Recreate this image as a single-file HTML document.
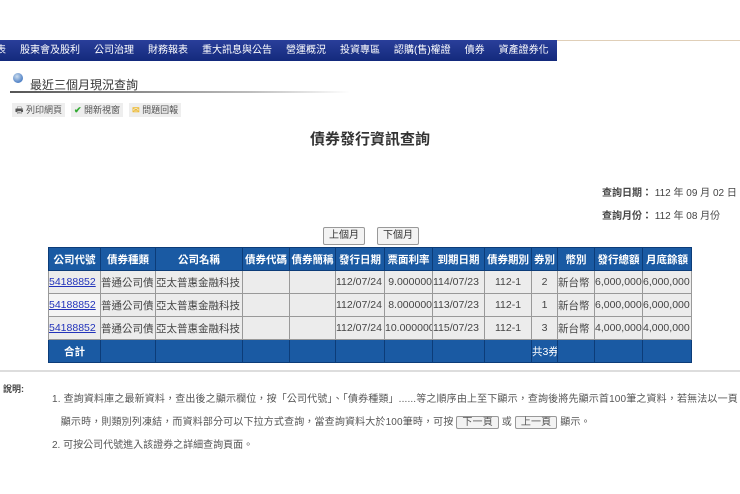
<!DOCTYPE html><html><head><meta charset="utf-8"><style>
body{margin:0;width:740px;height:494px;background:#fff;position:relative;overflow:hidden;font-family:"Liberation Sans","Noto Sans CJK TC",sans-serif;color:#333}
.abs{position:absolute}
.nav{left:0;top:40px;width:557px;height:21px;background:linear-gradient(#2a3f9a,#132a7c);color:#fff;font-size:10px;line-height:21px;white-space:nowrap}
.nav span{margin-right:14px}
table{border-collapse:collapse;font-size:10.5px;table-layout:fixed}
td,th{border:1px solid #999;height:22px;padding:0;white-space:nowrap;overflow:hidden}
th{background:#1a5aa3;color:#fff;border-color:#0c3c78;font-weight:bold}
tr.r td{background:#ececec;color:#444}
tr.tot td{background:#1a5aa3;color:#fff;border-color:#0c3c78;text-align:center}
a{color:#2233bb}
.btn{border:1px solid #999;background:#f3f3f3;border-radius:2px;font-size:10px;height:16px;line-height:16px;padding:0 5px}
</style></head><body>
<div class="abs" style="left:557px;top:40px;width:183px;height:1px;background:#e0cfb8"></div>
<div class="abs nav"><span style="margin-left:-4px">表</span><span>股東會及股利</span><span>公司治理</span><span>財務報表</span><span>重大訊息與公告</span><span>營運概況</span><span>投資專區</span><span>認購(售)權證</span><span>債券</span><span>資產證券化</span></div>
<div class="abs" style="left:13px;top:73px;width:10px;height:10px;border-radius:50%;background:radial-gradient(circle at 40% 35%,#cde,#1a5ab5)"></div>
<div class="abs" style="left:30px;top:76px;font-size:12px;color:#333">最近三個月現況查詢</div>
<div class="abs" style="left:10px;top:91px;width:340px;height:2px;background:linear-gradient(90deg,#555,#bbb 70%,#fff)"></div>
<div class="abs" style="left:12px;top:103px;font-size:9px;color:#555;white-space:nowrap"><span style="background:#eee;padding:2px 3px;margin-right:6px">🖶 列印網頁</span><span style="background:#eee;padding:2px 3px;margin-right:6px"><b style="color:#3a3">✔</b> 開新視窗</span><span style="background:#eee;padding:2px 3px"><b style="color:#eb3">✉</b> 問題回報</span></div>
<div class="abs" style="left:0;width:740px;top:128px;text-align:center;font-size:15px;font-weight:bold;color:#333">債券發行資訊查詢</div>
<div class="abs" style="left:602px;top:184px;font-size:10px;color:#444;white-space:nowrap"><b>查詢日期：</b> 112 年 09 月 02 日</div>
<div class="abs" style="left:602px;top:207px;font-size:10px;color:#444;white-space:nowrap"><b>查詢月份：</b> 112 年 08 月份</div>
<div class="abs btn" style="left:323px;top:227px">上個月</div>
<div class="abs btn" style="left:377px;top:227px">下個月</div>
<table class="abs" style="left:48px;top:247px;width:643px">
<colgroup><col style="width:52px"><col style="width:55px"><col style="width:87px"><col style="width:47px"><col style="width:46px"><col style="width:49px"><col style="width:48px"><col style="width:52px"><col style="width:47px"><col style="width:26px"><col style="width:37px"><col style="width:48px"><col style="width:49px"></colgroup>
<tr><th>公司代號</th><th>債券種類</th><th>公司名稱</th><th>債券代碼</th><th>債券簡稱</th><th>發行日期</th><th>票面利率</th><th>到期日期</th><th>債券期別</th><th>券別</th><th>幣別</th><th>發行總額</th><th>月底餘額</th></tr>
<tr class="r"><td><a href="#">54188852</a></td><td>普通公司債</td><td>亞太普惠金融科技</td><td></td><td></td><td>112/07/24</td><td style="text-align:right">9.000000</td><td>114/07/23</td><td style="text-align:center">112-1</td><td style="text-align:center">2</td><td>新台幣</td><td>6,000,000</td><td>6,000,000</td></tr>
<tr class="r"><td style="background:#f4f4f4"><a href="#">54188852</a></td><td>普通公司債</td><td>亞太普惠金融科技</td><td></td><td></td><td>112/07/24</td><td style="text-align:right">8.000000</td><td>113/07/23</td><td style="text-align:center">112-1</td><td style="text-align:center">1</td><td>新台幣</td><td>6,000,000</td><td>6,000,000</td></tr>
<tr class="r"><td><a href="#">54188852</a></td><td>普通公司債</td><td>亞太普惠金融科技</td><td></td><td></td><td>112/07/24</td><td style="text-align:right">10.000000</td><td>115/07/23</td><td style="text-align:center">112-1</td><td style="text-align:center">3</td><td>新台幣</td><td>4,000,000</td><td>4,000,000</td></tr>
<tr class="tot"><td><b>合計</b></td><td></td><td></td><td></td><td></td><td></td><td></td><td></td><td></td><td>共3券</td><td></td><td></td><td></td></tr>
</table>
<div class="abs" style="left:0;top:370px;width:740px;height:2px;background:#ddd"></div>
<div class="abs" style="left:3px;top:382px;font-size:9px;font-weight:bold;color:#444">說明:</div>
<div class="abs" style="left:52px;top:388px;font-size:10px;letter-spacing:0.15px;color:#555;line-height:23px;white-space:nowrap">1. 查詢資料庫之最新資料，查出後之顯示欄位，按「公司代號」、「債券種類」......等之順序由上至下顯示，查詢後將先顯示首100筆之資料，若無法以一頁<br>&nbsp;&nbsp;&nbsp;顯示時，則類別列凍結，而資料部分可以下拉方式查詢，當查詢資料大於100筆時，可按 <span class="btn">下一頁</span> 或 <span class="btn">上一頁</span> 顯示。</div>
<div class="abs" style="left:52px;top:436px;font-size:10px;color:#555;white-space:nowrap">2. 可按公司代號進入該證券之詳細查詢頁面。</div>
</body></html>
